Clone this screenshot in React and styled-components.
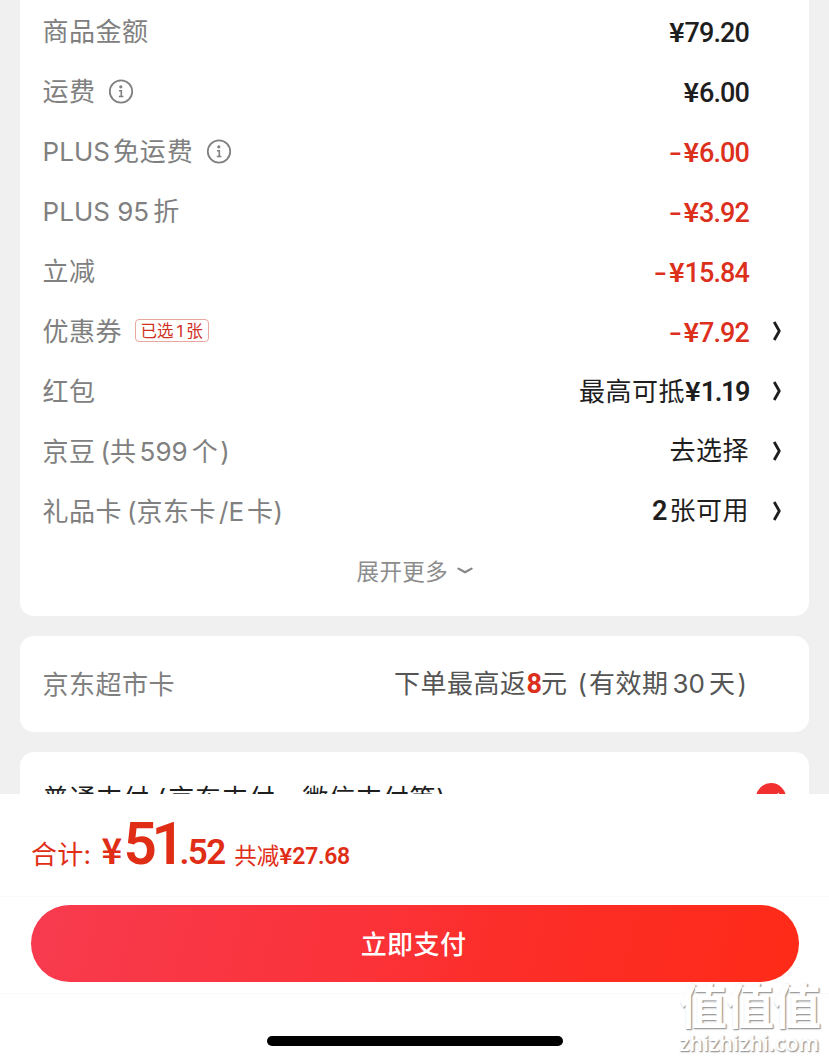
import React from 'react';
import styled, { createGlobalStyle } from 'styled-components';

const GlobalStyle = createGlobalStyle`
  * { box-sizing: border-box; }
  body { margin: 0; background: #fff; }
`;

const Screen = styled.div`
  position: relative;
  display: flex;
  flex-direction: column;
  width: 829px;
  height: 1061px;
  overflow: hidden;
  background: #fff;
  font-family: Inter, "Noto Sans CJK SC", sans-serif;
  font-size: 26px;
  white-space: pre;
`;

const Content = styled.main`
  display: flex;
  flex-direction: column;
  gap: 20px;
  height: 794px;
  padding: 0 20px;
  overflow: hidden;
  background: #f0f0f0;
`;

const Card = styled.section`
  flex: none;
  height: ${p => p.$height}px;
  padding: ${p => p.$pad || '0 27px 0 22.6px'};
  border-radius: ${p => (p.$cut ? '0 0 14px 14px' : '14px')};
  background: #fff;
`;

const Row = styled.div`
  display: flex;
  align-items: center;
  height: ${p => p.$height || 59.9}px;
`;

const Label = styled.span`
  display: flex;
  align-items: center;
  color: ${p => p.$color || '#808080'};
  letter-spacing: ${p => p.$ls || 0.5}px;
  line-height: 38px;
  padding-top: 1px;
`;

const Run = styled.span`
  letter-spacing: ${p => p.$ls || 0}px;
  margin: 0 ${p => p.$mr || 0}px 0 ${p => p.$ml || 0}px;
`;

const Value = styled.span`
  display: flex;
  align-items: baseline;
  margin-left: auto;
  margin-right: ${p => (p.$arrow ? 23 : 33)}px;
  padding-top: 0.4px;
  color: ${p => p.$color || '#1e1e1e'};
  letter-spacing: 0.5px;
  line-height: 38px;
`;

const Amount = styled.span`
  color: ${p => p.$color || 'inherit'};
  font-family: Roboto, "Noto Sans CJK SC", sans-serif;
  font-size: ${p => p.$size || 27}px;
  font-weight: ${p => p.$weight || 500};
  letter-spacing: ${p => (p.$ls === undefined ? -0.9 : p.$ls)}px;
  margin-right: ${p => p.$mr || 0}px;
`;

const Yen = styled(Amount)`
  font-family: "Noto Sans CJK SC", sans-serif;
  font-size: ${p => p.$size || 26.5}px;
  font-weight: ${p => p.$weight || 700};
  letter-spacing: 0;
`;

const Minus = styled(Amount)`
  display: inline-block;
  width: 14.5px;
  transform: scaleX(1.4);
  transform-origin: left center;
`;

const Tag = styled.span`
  display: flex;
  align-items: center;
  justify-content: center;
  width: 74px;
  height: 23px;
  margin-left: 12.5px;
  margin-top: -2px;
  border: 1px solid #e9a7a0;
  border-radius: 4px;
  color: #cf3324;
  font-size: 16.5px;
  letter-spacing: 0;
  line-height: 20px;
`;

const More = styled.div`
  display: flex;
  align-items: center;
  justify-content: center;
  gap: 9px;
  height: 58px;
  padding-left: 5px;
  color: #8c8c8c;
  font-size: 22.5px;
  letter-spacing: 0.4px;
`;

const Radio = styled.svg`
  margin-left: auto;
  margin-right: -4px;
  margin-bottom: 1px;
`;

const Footer = styled.footer`
  display: flex;
  flex-direction: column;
  height: 267px;
  background: #fff;
`;

const Total = styled.div`
  display: flex;
  align-items: baseline;
  height: 103px;
  padding: 13px 0 0 31px;
  border-bottom: 1px solid #fafafa;
  color: #e02d16;
  line-height: 74px;
`;

const PayBar = styled.div`
  display: flex;
  height: 97px;
  padding: 8px 0 0 30.5px;
  border-bottom: 1px solid #fafafa;
`;

const PayButton = styled.button`
  width: 768px;
  height: 77px;
  padding: 0 2px 1px 0;
  border: 0;
  border-radius: 39px;
  background: linear-gradient(105deg, #f73b4f 0%, #fb3238 45%, #fc2e2a 60%, #ff2b18 100%);
  color: #fff;
  font: 500 26px/38px "Noto Sans CJK SC", sans-serif;
  letter-spacing: 0.4px;
`;

const HomeIndicator = styled.div`
  width: 296px;
  height: 10px;
  margin: 42px auto 0;
  border-radius: 5px;
  background: #000;
`;

const Watermark = styled.div`
  position: absolute;
  left: 679px;
  top: 974px;
  color: #fff;
  text-shadow: 1px 1px 1px #999, 1px 1px 2px #bbb;
`;

const MarkName = styled.div`
  font: 700 48px/58px "Noto Sans CJK SC", sans-serif;
  letter-spacing: -1px;
`;

const MarkSite = styled.div`
  margin-top: -2px;
  font: 600 21.5px/26px "Open Sans", sans-serif;
`;

const InfoIcon = () => (
  <svg width="26" height="26" viewBox="0 0 26 26" fill="none" stroke="#808080" style={{ marginLeft: 12 }}>
    <circle cx="13" cy="12.5" r="11.2" strokeWidth="1.8" />
    <circle cx="12.8" cy="7.8" r="1.6" fill="#808080" stroke="none" />
    <path d="M11 11.7h2.3v5.6M10.8 17.5h4.6" strokeWidth="1.6" />
  </svg>
);

const Arrow = () => (
  <svg width="10" height="20" viewBox="0 0 10 20" fill="none" stroke="#1e1e1e" strokeWidth="2.8" strokeLinecap="butt" strokeLinejoin="round">
    <path d="M2.2 1L7.3 10L2.2 19" />
  </svg>
);

const ChevronDown = () => (
  <svg width="16" height="8" viewBox="0 0 16 8" fill="none" stroke="#858585" strokeWidth="2.2" strokeLinecap="round" strokeLinejoin="round">
    <path d="M1.5 2.6L8 6.3L14.5 2.6" />
  </svg>
);

const RED = '#dc2f1c';

const Discount = ({ children, arrow }) => (
  <Value $color={RED} $arrow={arrow}>
    <Minus>-</Minus><Yen>¥</Yen><Amount>{children}</Amount>
  </Value>
);

export default function App() {
  return (
    <Screen>
      <GlobalStyle />
      <Content>
        <Card $height={616} $cut $pad="2px 27px 0 22.6px">
          <Row>
            <Label>商品金额</Label>
            <Value><Yen>¥</Yen><Amount>79.20</Amount></Value>
          </Row>
          <Row>
            <Label>运费<InfoIcon /></Label>
            <Value><Yen>¥</Yen><Amount>6.00</Amount></Value>
          </Row>
          <Row>
            <Label><Run>PLUS</Run><Run $ml={3} $ls={0.9}>免运费</Run><InfoIcon /></Label>
            <Discount>6.00</Discount>
          </Row>
          <Row>
            <Label><Run>PLUS 95</Run><Run $ml={4}>折</Run></Label>
            <Discount>3.92</Discount>
          </Row>
          <Row>
            <Label>立减</Label>
            <Discount>15.84</Discount>
          </Row>
          <Row>
            <Label>优惠券<Tag>已选<Run $ml={3} $mr={3}>1</Run>张</Tag></Label>
            <Discount arrow>7.92</Discount>
            <Arrow />
          </Row>
          <Row>
            <Label>红包</Label>
            <Value $arrow>最高可抵<Yen>¥</Yen><Amount $weight={600} $ls={-1.4}>1.19</Amount></Value>
            <Arrow />
          </Row>
          <Row>
            <Label>京豆<Run $ml={5}>(</Run>共<Run $ml={3} $mr={4}>599</Run>个<Run $ml={2}>)</Run></Label>
            <Value $arrow>去选择</Value>
            <Arrow />
          </Row>
          <Row>
            <Label>礼品卡<Run $ml={5}>(</Run>京东卡<Run $ml={3} $mr={3}>/E</Run>卡)</Label>
            <Value $arrow><Amount $weight={600} $mr={3}>2</Amount>张可用</Value>
            <Arrow />
          </Row>
          <More>展开更多<ChevronDown /></More>
        </Card>
        <Card $height={96}>
          <Row $height={96}>
            <Label>京东超市卡</Label>
            <Value $color="#555">
              下单最高返<Amount $color={RED} $weight={700}>8</Amount>元
              <Run $ml={10} $mr={2}>(</Run>有效期<Run $ml={4} $mr={4}>30</Run>天<Run $ml={2} $mr={2}>)</Run>
            </Value>
          </Row>
        </Card>
        <Card $height={96}>
          <Row $height={93}>
            <Label $color="#1e1e1e" $ls={0.8}>普通支付<Run $ml={7} $mr={2}>(</Run>京东支付、微信支付等)</Label>
            <Radio width="30" height="30" viewBox="0 0 30 30" fill="none">
              <circle cx="15" cy="15" r="15" fill="#f2302f" />
              <path d="M8 15.5L13 20.5L23 10.5" stroke="#fff" strokeWidth="2" />
            </Radio>
          </Row>
        </Card>
      </Content>
      <Footer>
        <Total>
          <Run $ls={0.3} $mr={10}>合计:</Run>
          <Yen $size={35} $mr={1.5}>¥</Yen>
          <Amount $size={58.5} $weight={600} $ls={-5.5}>51</Amount>
          <Amount $size={35} $weight={600} $ls={-1.5} $mr={9.5}>.52</Amount>
          <Amount $size={22.5} $weight={400} $ls={0}>共减</Amount>
          <Yen $size={22}>¥</Yen>
          <Amount $size={23} $weight={600} $ls={-0.3}>27.68</Amount>
        </Total>
        <PayBar>
          <PayButton>立即支付</PayButton>
        </PayBar>
        <HomeIndicator />
      </Footer>
      <Watermark>
        <MarkName>值值值</MarkName>
        <MarkSite>zhizhizhi.com</MarkSite>
      </Watermark>
    </Screen>
  );
}
